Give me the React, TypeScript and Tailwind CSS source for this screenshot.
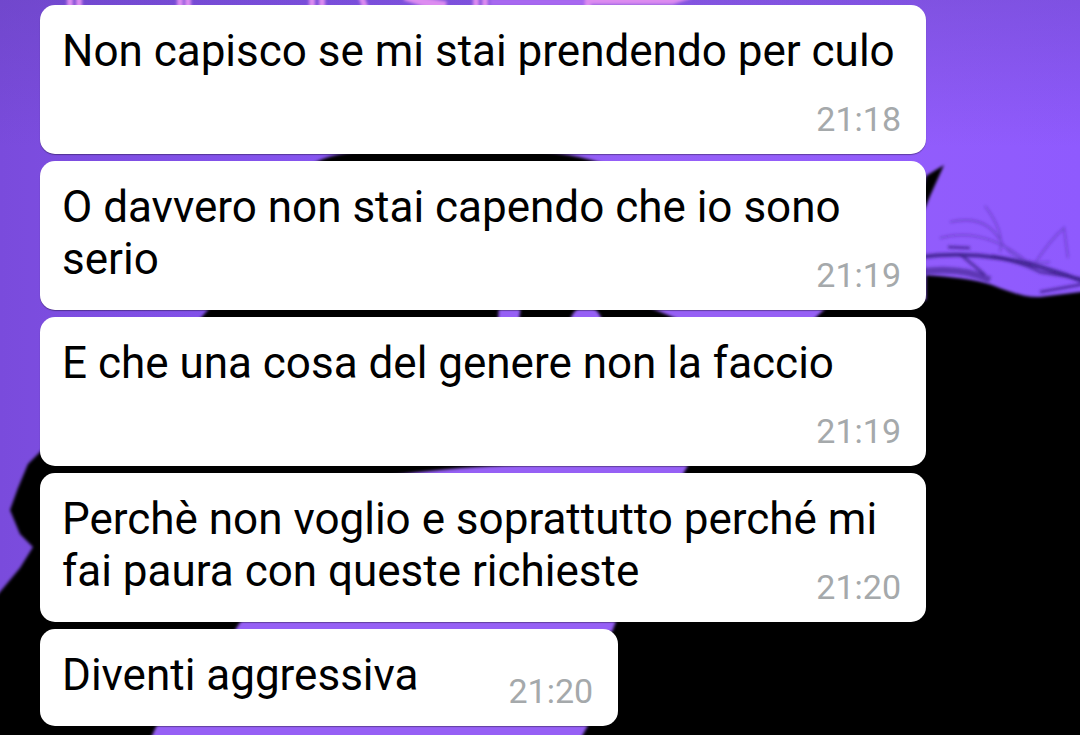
import React from "react";

interface Message {
  text: string;
  time: string;
}

const messages: Message[] = [
  { text: "Non capisco se mi stai prendendo per culo", time: "21:18" },
  { text: "O davvero non stai capendo che io sono serio", time: "21:19" },
  { text: "E che una cosa del genere non la faccio", time: "21:19" },
  {
    text: "Perchè non voglio e soprattutto perché mi fai paura con queste richieste",
    time: "21:20",
  },
  { text: "Diventi aggressiva", time: "21:20" },
];

const Wallpaper: React.FC = () => (
  <svg
    className="absolute inset-0 h-full w-full"
    viewBox="0 0 1080 735"
    preserveAspectRatio="none"
    aria-hidden="true"
  >
    <defs>
      <linearGradient id="sky" x1="0" y1="0" x2="1" y2="0">
        <stop offset="0" stopColor="#7a4bdc" />
        <stop offset="0.3" stopColor="#8655f0" />
        <stop offset="0.6" stopColor="#9660f8" />
        <stop offset="1" stopColor="#8f5afe" />
      </linearGradient>
      <linearGradient id="dusk" x1="0" y1="0" x2="0" y2="1">
        <stop offset="0" stopColor="#6040b0" stopOpacity="0.35" />
        <stop offset="0.2" stopColor="#6040b0" stopOpacity="0" />
      </linearGradient>
      <filter id="soft" x="-5%" y="-5%" width="110%" height="110%">
        <feGaussianBlur stdDeviation="1.5" />
      </filter>
    </defs>
    <rect width="1080" height="735" fill="url(#sky)" />
    <rect width="1080" height="735" fill="url(#dusk)" />

    {/* neon sign */}
    <g filter="url(#soft)" fill="none" stroke="#dd8cf0">
      <path
        d="M70 -10V10M79 -10V10M180 -10V10M188 -10V10M312 -10V10M322 -10V10M359 -10L366 10M476 -10V10M485 -10V10M588 -10V10"
        strokeWidth="6"
      />
      <path d="M405 -4L424 2L446 6" strokeWidth="9" />
      <path d="M590 0H672L690 -6" strokeWidth="9" />
      <path d="M490 2H585" stroke="#a868f0" strokeWidth="8" />
    </g>

    {/* silhouette */}
    <g filter="url(#soft)" fill="#020103">
      <path d="M310 166C330 150 380 148 455 148S570 152 610 166L655 300L926 300V275C950 277 975 279 992 285C1010 292 1026 298 1040 297L1090 291V745H-10V604L0 592L20 568L33 547L20 534L10 510L18 488L28 464L42 450L190 330L208 310Z" />
      <path d="M915 226L926 176L944 165L930 196L926 206Z" />
    </g>

    {/* sky showing through */}
    <g filter="url(#soft)" fill="#9660f5">
      <path d="M498 320L499 306H521L519 320Z" />
      <path d="M570 320Q575 306 586 306Q597 306 602 320Z" />
      <path d="M646 306L682 321H812L828 306Z" />
      <path d="M390 476Q450 467 560 462H690L682 476Z" />
      <path d="M234 632L244 616H618L612 632Z" />
      <path d="M150 740L160 718H592L580 740Z" />
    </g>

    {/* loose hair */}
    <g filter="url(#soft)" fill="none" stroke="#3a1c86">
      <path d="M920 272Q960 266 990 280" strokeWidth="7" opacity="0.6" />
      <path d="M920 257Q960 252 1000 258T1090 284" strokeWidth="4" opacity="0.85" />
      <path
        d="M948 247L970 248M960 254L985 275M992 256Q1020 262 1040 272L1090 280M1040 292L1084 284"
        strokeWidth="3"
        opacity="0.7"
      />
      <path
        d="M950 222Q985 214 1000 240T1050 262M940 238Q985 226 1030 264M1036 262Q1050 240 1064 228L1068 258M985 206Q1005 232 1000 252"
        strokeWidth="2"
        opacity="0.35"
      />
    </g>
  </svg>
);

const Bubble: React.FC<Message> = ({ text, time }) => (
  <li className="flow-root w-fit rounded-[15px] bg-white pt-5 pr-[25px] pb-[15px] pl-[22px] text-[44px] leading-[52px] text-black shadow-[0_1px_1px_rgba(0,0,0,0.35)]">
    {text}
    {/* shares the last line when there is room, otherwise drops below it */}
    <time className="float-right mt-[22px] ml-[90px] text-[34px] leading-10 text-[#a5a9ab]">
      {time}
    </time>
  </li>
);

const App: React.FC = () => {
  return (
    <main className="relative min-h-screen overflow-hidden bg-black font-['Roboto',sans-serif]">
      <Wallpaper />
      <ul className="relative flex flex-col gap-[7px] pt-[5px] pb-[9px] pl-10 pr-[154px]">
        {messages.map((message) => (
          <Bubble key={message.text} {...message} />
        ))}
      </ul>
    </main>
  );
};

export default App;
